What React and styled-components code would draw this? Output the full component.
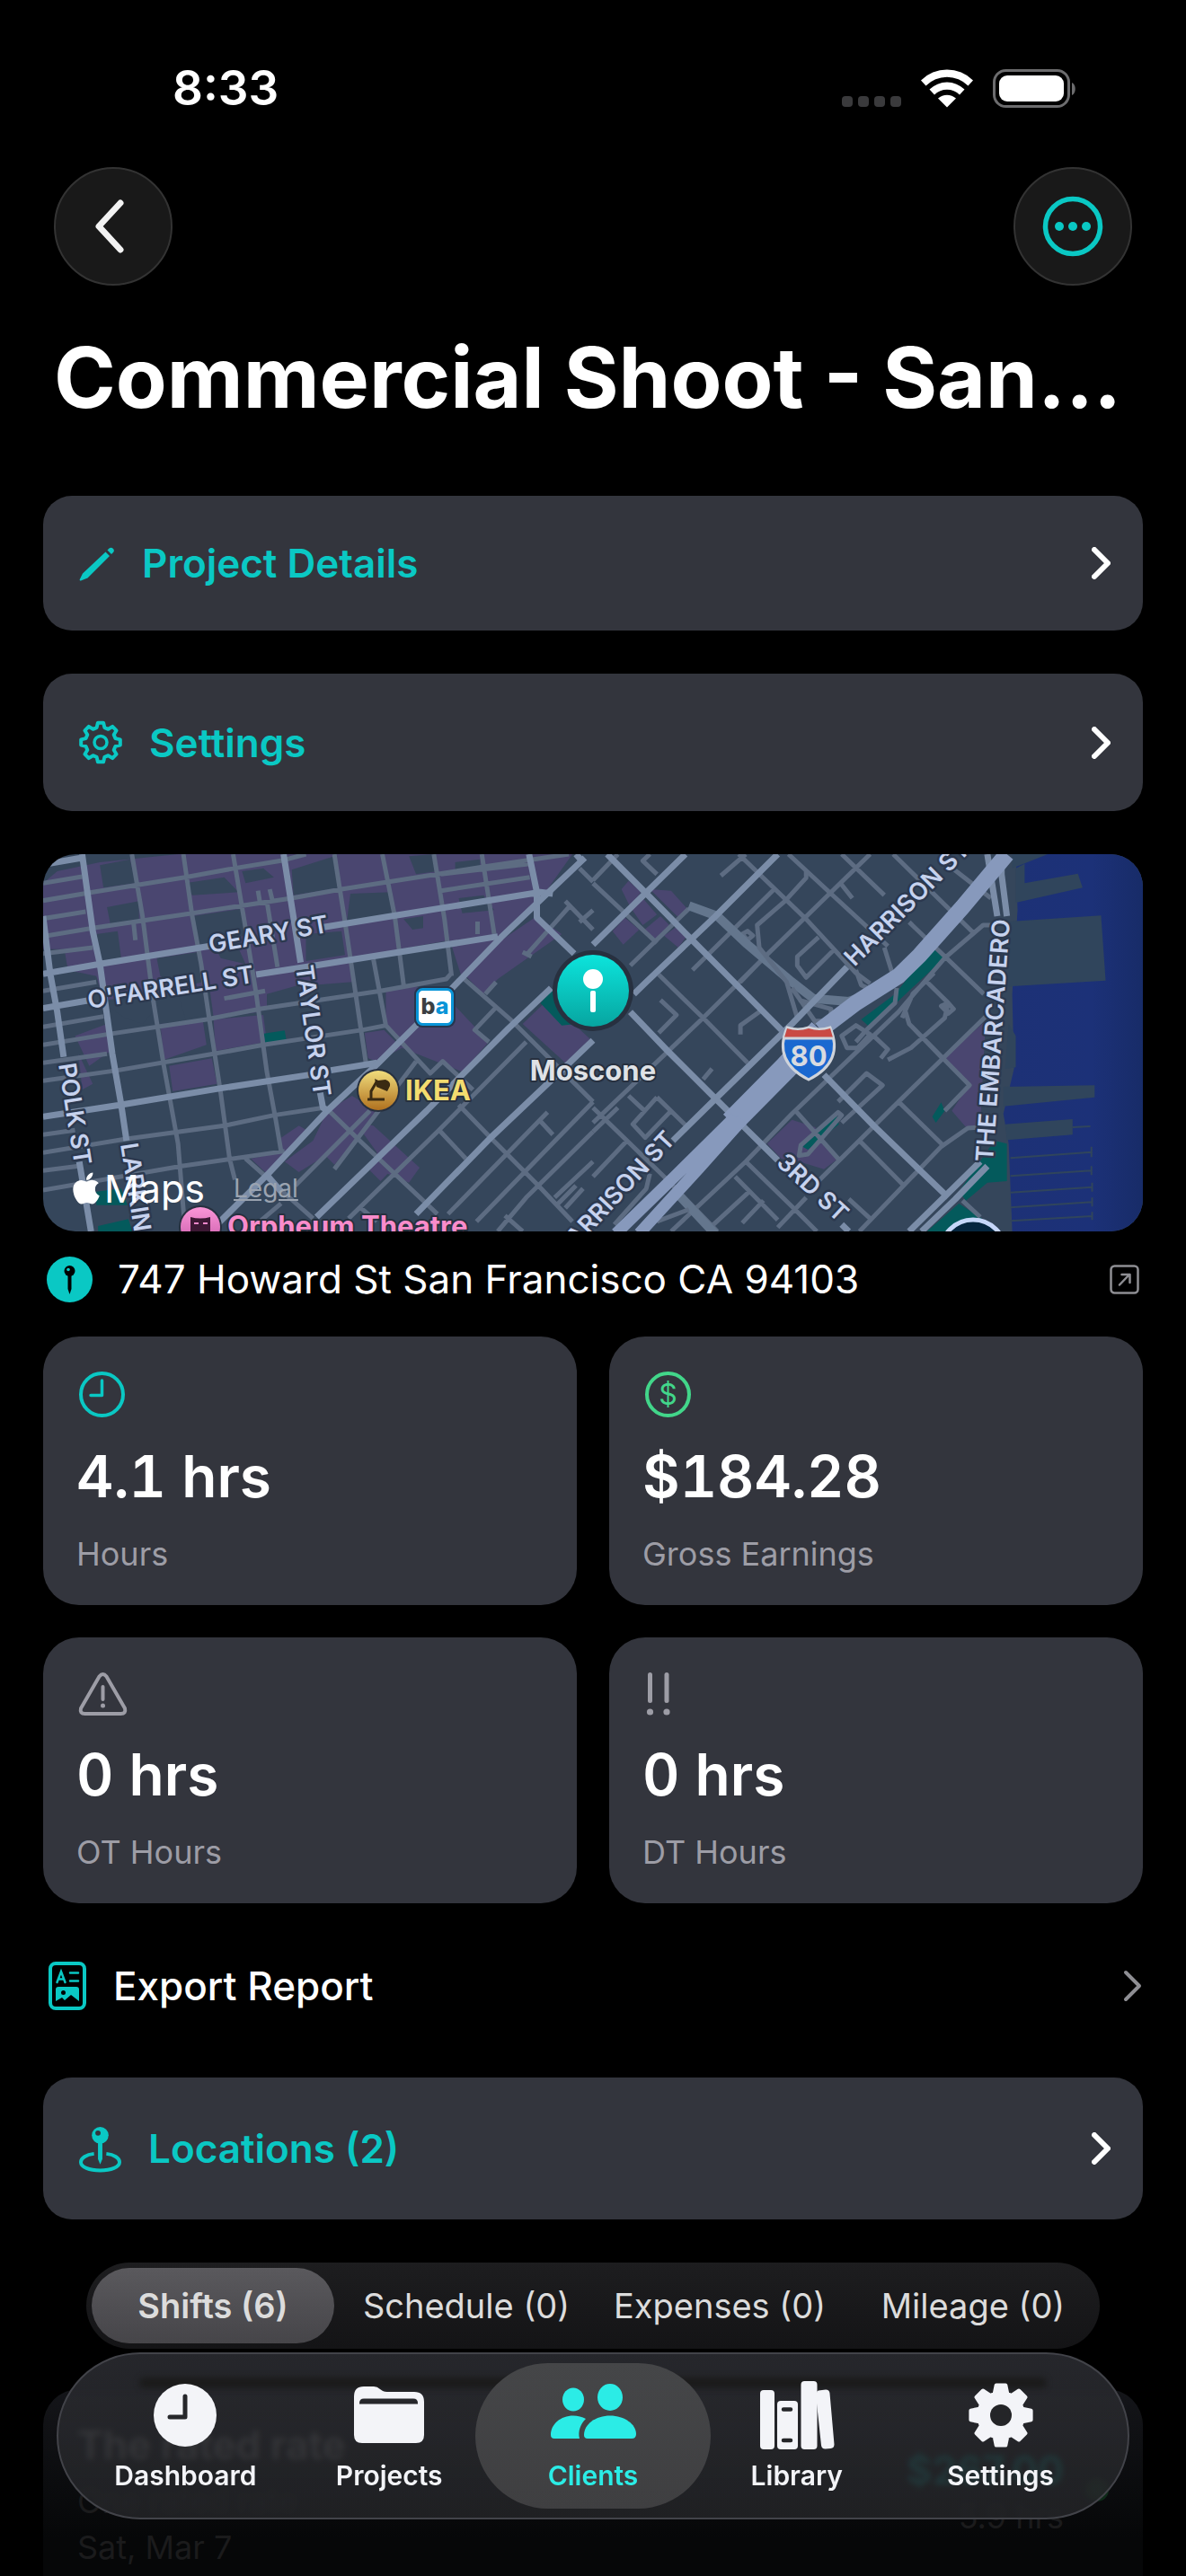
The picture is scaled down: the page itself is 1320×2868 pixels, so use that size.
import React, { useState } from "react";
import styled, { createGlobalStyle, css } from "styled-components";
import { FaApple } from "react-icons/fa";

const teal = "#0ac8c4";

const GlobalStyle = createGlobalStyle`
  * {
    box-sizing: border-box;
  }

  body {
    margin: 0;
    background: #000;
    color: #fff;
    font-family: Inter, "Liberation Sans", sans-serif;
  }

  button {
    border: 0;
    padding: 0;
    background: none;
    color: inherit;
    font: inherit;
    cursor: pointer;
  }

  svg {
    display: block;
    flex: none;
  }
`;

const Page = styled.div`
  min-height: 100vh;
  display: flex;
  flex-direction: column;
`;

const StatusBar = styled.div`
  display: flex;
  align-items: center;
  justify-content: space-between;
  padding: 68px 120px 58px 192px;
  line-height: 60px;
  font-size: 53px;
  font-weight: 600;
`;

const NavBar = styled.nav`
  display: flex;
  justify-content: space-between;
  padding: 0 60px;
`;

const RoundButton = styled.button`
  width: 132px;
  height: 132px;
  display: flex;
  align-items: center;
  justify-content: center;
  border: 2px solid #333;
  border-radius: 50%;
  background: #191919;
`;

const Title = styled.h1`
  margin: 0;
  padding: 42px 60px 72px;
  font-size: 93px;
  font-weight: 700;
  line-height: 120px;
  white-space: nowrap;
  overflow: hidden;
`;

const Content = styled.main`
  flex: 1;
  display: flex;
  flex-direction: column;
  padding: 0 48px;
`;

const Stack = styled.div`
  display: flex;
  flex-direction: column;
  gap: 48px;
`;

const RowButton = styled.button`
  display: flex;
  align-items: center;
  gap: 30px;
  width: 100%;
  text-align: left;
  font-size: 44px;
  font-weight: 500;
  line-height: 54px;

  span {
    flex: 1;
  }

  ${(props) =>
    props.$card
      ? css`
          padding: 48px 36px 48px 40px;
          border-radius: 32px;
          background: #33353d;
          color: ${teal};
          font-weight: 600;
        `
      : css`
          padding: 65px 1px 75px 6px;
        `}
`;

const MapBox = styled.div`
  position: relative;
  height: 420px;
  border-radius: 36px;
  overflow: hidden;

  > svg {
    width: 100%;
    height: 100%;
  }
`;

const MapCredit = styled.div`
  position: absolute;
  left: 28px;
  bottom: 20px;
  display: flex;
  align-items: center;
  font-size: 43px;
  line-height: 56px;

  a {
    margin-left: 32px;
    color: #9aa3b0;
    font-size: 28px;
  }
`;

const Address = styled.div`
  display: flex;
  align-items: center;
  gap: 28px;
  padding: 27px 4px 38px;
  font-size: 44px;
  line-height: 52px;

  span {
    flex: 1;
  }
`;

const Stats = styled.div`
  display: grid;
  grid-template-columns: 1fr 1fr;
  gap: 36px;
`;

const StatCard = styled.div`
  padding: 39px 37px 35px;
  border-radius: 40px;
  background: #33353d;

  .value {
    margin: 26px 0 24px;
    font-size: 64px;
    font-weight: 600;
    font-variant-numeric: tabular-nums;
    line-height: 80px;
  }

  .label {
    color: #9d9da6;
    font-size: 36px;
    line-height: 44px;
  }
`;

const Segments = styled.div`
  display: grid;
  grid-template-columns: repeat(4, 1fr);
  margin: 48px 48px 45px;
  height: 96px;
  border-radius: 48px;
  background: linear-gradient(#1d1d1f, #141416);
`;

const Segment = styled.button`
  margin: 6px;
  border-radius: 42px;
  color: #dcdcdc;
  font-size: 38px;
  white-space: nowrap;

  ${(props) =>
    props.$active &&
    css`
      background: linear-gradient(#5a595d, #464549);
      font-weight: 600;
    `}
`;

const ShiftCard = styled.article`
  flex: 1;
  display: flex;
  justify-content: space-between;
  padding: 32px 38px 0;
  border-radius: 40px 40px 0 0;
  background: linear-gradient(#141519, #060708 80%);
  color: #1b1b1c;
  font-size: 36px;
  line-height: 44px;

  .name {
    color: #757575;
    font-size: 44px;
    font-weight: 600;
    line-height: 60px;
    padding-bottom: 11px;
  }

  .date {
    padding-top: 7px;
  }
`;

const ShiftPay = styled.div`
  display: grid;
  grid-template-columns: auto 26px;
  align-items: center;
  align-content: start;
  column-gap: 24px;
  padding-top: 28px;
  text-align: right;

  .amount {
    color: #078a86;
    font-size: 44px;
    font-weight: 600;
    line-height: 60px;
  }

  .dot {
    grid-row: span 2;
    width: 26px;
    height: 26px;
    border-radius: 50%;
    background: #0e2b19;
  }
`;

const TabBar = styled.nav`
  position: fixed;
  right: 63px;
  bottom: 63px;
  left: 63px;
  display: grid;
  grid-template-columns: repeat(5, 1fr);
  height: 186px;
  padding: 10px 28px;
  border: 2px solid #424349;
  border-radius: 93px;
  background: linear-gradient(
    rgba(39, 40, 45, 0.97),
    rgba(40, 41, 45, 0.84) 50%,
    rgba(36, 37, 40, 0.84)
  );
  backdrop-filter: blur(3px);

  &:before {
    content: "";
    position: absolute;
    top: 26px;
    right: 90px;
    left: 90px;
    height: 12px;
    border-radius: 6px;
    background: #1b1b1b;
    filter: blur(3px);
  }
`;

const Tab = styled.button`
  position: relative;
  display: flex;
  flex-direction: column;
  align-items: center;
  justify-content: center;
  gap: 10px;
  margin: 0 -18px;
  border-radius: 81px;
  color: #f3f4f8;
  font-size: 30px;
  font-weight: 600;
  line-height: 36px;

  ${(props) =>
    props.$active &&
    css`
      background: linear-gradient(#454648, #3f3f41);
      color: #2bece6;
    `}
`;

// closed outline of an eight-toothed cog around (0, 0)
function gearPath(outer, inner, top, base) {
  const points = [];
  for (let i = 0; i < 8; i++) {
    const steps = [
      [inner, -base],
      [outer, -top],
      [outer, top],
      [inner, base],
    ];
    steps.forEach(([r, deg]) => {
      const a = ((i * 45 + deg - 90) * Math.PI) / 180;
      points.push(`${(r * Math.cos(a)).toFixed(1)} ${(r * Math.sin(a)).toFixed(1)}`);
    });
  }
  return `M${points.join("L")}Z`;
}

function StatusIcons() {
  return (
    <svg width="263" height="46" viewBox="0 0 263 46" fill="#fff">
      {[0, 18, 36, 54].map((x) => (
        <rect key={x} x={x} y="32" width="12" height="12" rx="4" fill="#3a3a3c" />
      ))}
      <path d="M88 14.500a41 41 0 0 1 58 0l-5.500 6a33 33 0 0 0-47 0z" />
      <path d="M97.500 24.500a28 28 0 0 1 39 0l-5.500 6a20 20 0 0 0-28 0z" />
      <path d="M107 34.500a15 15 0 0 1 20 0l-10 10z" />
      <rect x="169.500" y="3.500" width="83" height="40" rx="13" fill="none" stroke="#6c6c6e" strokeWidth="3" />
      <rect x="175" y="9" width="72" height="29" rx="9" />
      <path d="M256 17c5 2 5 12 0 14z" fill="#6c6c6e" />
    </svg>
  );
}

function Chevron({ color = "#fff", thick = 6 }) {
  return (
    <svg width="21" height="36" viewBox="0 0 21 36" fill="none">
      <path
        d="M3 3L18 18L3 33"
        stroke={color}
        strokeWidth={thick}
        strokeLinecap="round"
        strokeLinejoin="round"
      />
    </svg>
  );
}

function PencilIcon() {
  return (
    <svg width="40" height="54" viewBox="0 0 40 54" fill={teal}>
      <path d="M29.500 14.500l4.500 4.500L9.500 43.500l-7.500 3a1 1 0 0 1-1.300-1.300L4 38.500z" />
      <path d="M31.500 12.500l2-2a3.200 3.200 0 0 1 4.500 4.500l-2 2z" />
    </svg>
  );
}

function GearIcon() {
  return (
    <svg width="48" height="57" viewBox="-24 -28.500 48 57" fill="none" stroke={teal}>
      <path d={gearPath(22, 17, 8, 15)} strokeWidth="4" strokeLinejoin="round" />
      <circle r="7" strokeWidth="3.500" />
    </svg>
  );
}

function LocationIcon() {
  return (
    <svg width="47" height="62" viewBox="0 0 48 62" fill="none">
      <path
        d="M17 37C8 38 2 42 2 46.500C2 52 11.500 56 24 56S46 52 46 46.500C46 42 40 38 31 37"
        stroke={teal}
        strokeWidth="4"
      />
      <path d="M21.500 23h5v20l-2.500 6l-2.500-6z" fill={teal} />
      <circle cx="24" cy="16" r="9.500" fill={teal} />
      <circle cx="21.500" cy="13.500" r="3" fill="#33353d" />
    </svg>
  );
}

function ReportIcon() {
  return (
    <svg width="42" height="54" viewBox="0 0 42 54" fill="none" stroke={teal}>
      <rect x="2" y="2" width="38" height="50" rx="6" strokeWidth="4" />
      <path d="M9.500 23l4.500-12l4.500 12M11 19.500h6M24 12.500h9M24 21.500h9" strokeWidth="2.500" strokeLinecap="round" />
      <path d="M11 28h20q3 0 3 3v13l-9-7l-7 6l-3-3l-7 4V31q0-3 3-3z" fill={teal} stroke="none" />
      <circle cx="16.500" cy="34.500" r="2.500" fill="#000" stroke="none" />
    </svg>
  );
}

function ClockIcon() {
  return (
    <svg width="56" height="51" viewBox="-3 0 56 51" fill="none" stroke={teal} strokeLinecap="round">
      <circle cx="25.500" cy="25.500" r="23.500" strokeWidth="4" />
      <path d="M25.500 10v16.500H13" strokeWidth="3.500" strokeLinejoin="round" />
    </svg>
  );
}

const DollarText = styled.text`
  font-size: 32px;
  text-anchor: middle;
`;

function DollarIcon() {
  return (
    <svg width="56" height="51" viewBox="-3 0 56 51" fill="none">
      <circle cx="25.500" cy="25.500" r="23.500" stroke="#42d68a" strokeWidth="4" />
      <DollarText x="25.500" y="37" fill="#42d68a">
        $
      </DollarText>
    </svg>
  );
}

function WarningIcon() {
  return (
    <svg width="57" height="48" viewBox="-3 0 57 48" fill="none" stroke="#9d9da6" strokeWidth="4" strokeLinecap="round">
      <path d="M22.500 4.500q4-5 8 0L51 40q1.500 6-4.500 6H6.500Q.5 46 2 40z" strokeLinejoin="round" />
      <path d="M26.500 16v14" />
      <circle cx="26.500" cy="37" r="2.500" fill="#9d9da6" stroke="none" />
    </svg>
  );
}

function ExclaimIcon() {
  return (
    <svg width="57" height="48" viewBox="-3 0 57 48" fill="#9d9da6">
      {[3, 21.5].map((x) => (
        <g key={x}>
          <rect x={x} y="0" width="5" height="34" rx="2.500" />
          <circle cx={x + 2.5} cy="44" r="3.600" />
        </g>
      ))}
    </svg>
  );
}

function PinBadge() {
  return (
    <svg width="51" height="51" viewBox="0 0 51 51">
      <circle cx="25.500" cy="25.500" r="25.500" fill={teal} />
      <circle cx="25.500" cy="16" r="6" />
      <path d="M23.500 20h4v16l-2 6l-2-6z" />
      <circle cx="24" cy="14.500" r="1.800" fill={teal} />
    </svg>
  );
}

function OpenIcon() {
  return (
    <svg width="33" height="33" viewBox="0 0 33 33" fill="none" stroke="#8e8e93" strokeLinecap="round" strokeLinejoin="round">
      <rect x="1.500" y="1.500" width="30" height="30" rx="4" strokeWidth="2.500" />
      <path d="M11 22.500L22 11M13.500 11H22.500V20" strokeWidth="2.500" />
    </svg>
  );
}

function TabIcon({ name }) {
  return (
    <svg width="96" height="78" viewBox="-48 -39 96 78" fill="currentColor">
      {name === "Dashboard" && (
        <>
          <circle r="35" />
          <path d="M0-21V2H-17" fill="none" stroke="#26272b" strokeWidth="5" strokeLinecap="round" strokeLinejoin="round" />
        </>
      )}
      {name === "Projects" && (
        <>
          <path d="M-39-21q0-11 11-11h11q4 0 7 3l3 2q2 1 5 1H28q11 0 11 11v37q0 9-9 9H-30q-9 0-9-9z" />
          <path d="M-33-12.500v-1q0-5 5-5H27q5 0 5 5v1z" fill="#26272b" />
        </>
      )}
      {name === "Clients" && (
        <>
          <ellipse cx="-22" cy="-17.500" rx="12" ry="13" />
          <ellipse cx="19" cy="-20" rx="14" ry="15" />
          <path d="M-47 22C-47 10-36 0.500-22 0.500C-17 0.500-12 2-8 4C-14 10-17 18-15 26H-43Q-47 26-47 22z" />
          <path d="M-10 22C-10 10 3 0.500 19 0.500S48 10 48 21Q48 26 43 26H-6Q-10 26-10 22z" />
        </>
      )}
      {name === "Library" && (
        <>
          <rect x="-41" y="-28" width="16" height="66" rx="4" />
          <rect x="-22" y="-16" width="23" height="54" rx="4" />
          <rect x="4.500" y="-38" width="18" height="76" rx="4" />
          <path d="M22-25q0-2 2-2.400l8-1q4 0 4.500 4l5 57q0 4-4 4.500l-6 .5q-4 0-4.500-4l-6-56z" />
          <path d="M-15-6.500h8M-15 28h8" stroke="#242528" strokeWidth="4.500" strokeLinecap="round" />
        </>
      )}
      {name === "Settings" && (
        <>
          <path d={gearPath(34, 25, 9, 17)} stroke="currentColor" strokeWidth="4" strokeLinejoin="round" />
          <circle r="12" fill="#242528" />
        </>
      )}
    </svg>
  );
}

const StreetLabel = styled.text`
  fill: #c6d2ee;
  stroke: #2c394f;
  stroke-width: 5px;
  stroke-linejoin: round;
  paint-order: stroke;
  font-size: 27px;
  font-weight: 600;
`;

const PlaceLabel = styled.text`
  stroke: #27303f;
  stroke-width: 4px;
  stroke-linejoin: round;
  paint-order: stroke;
  font-size: 31px;
  font-weight: 700;
`;

const MapLayer = styled.g`
  fill: none;
  stroke-linejoin: round;

  path {
    vector-effect: non-scaling-stroke;
  }

  .minor {
    stroke: #5d6c82;
    stroke-width: 5px;
  }

  .major {
    stroke: #7b8da8;
    stroke-width: 7px;
  }

  .ramp {
    stroke: #64768d;
    stroke-width: 10px;
  }

  .freeway {
    stroke: #8799bc;
  }

  .shops {
    fill: #4a4670;
  }

  .land {
    fill: #35465b;
  }

  .pier {
    fill: #30455c;
  }

  .park {
    fill: #045a5c;
  }
`;

const streets = [
  { name: "GEARY ST", x: 186, y: 110, turn: -10 },
  { name: "O'FARRELL ST", x: 51, y: 172, turn: -9 },
  { name: "TAYLOR ST", x: 281, y: 125, turn: 82 },
  { name: "POLK ST", x: 17, y: 234, turn: 81 },
  { name: "LARKIN ST", x: 86, y: 323, turn: 81 },
  { name: "HARRISON ST", x: 903, y: 126, turn: -45 },
  { name: "HARRISON ST", x: 705, y: 319, turn: -47, anchor: "end" },
  { name: "3RD ST", x: 815, y: 345, turn: 43 },
  { name: "THE EMBARCADERO", x: 1057, y: 343, turn: -86 },
];

function CityMap() {
  return (
    <svg viewBox="0 0 1224 420" preserveAspectRatio="xMidYMid slice" role="img" aria-label="Map of Moscone">
      <defs>
        <linearGradient id="pinFill" x2="0" y2="1">
          <stop offset="0" stopColor="#0ce4dc" />
          <stop offset="1" stopColor="#07a5a0" />
        </linearGradient>
        <linearGradient id="goldFill" x2="0" y2="1">
          <stop offset="0" stopColor="#f0dc7c" />
          <stop offset="1" stopColor="#b0711f" />
        </linearGradient>
        <linearGradient id="pinkFill" x2="0" y2="1">
          <stop offset="0" stopColor="#fa96d8" />
          <stop offset="1" stopColor="#c95aa8" />
        </linearGradient>
        <linearGradient id="bayFill">
          <stop offset="0" stopColor="#1d3176" />
          <stop offset=".6" stopColor="#1c3178" />
          <stop offset="1" stopColor="#172b66" />
        </linearGradient>
      </defs>
      <rect width="1224" height="420" fill="#35465b" />

      {/* downtown, west of the pin */}
      <MapLayer transform="translate(-8 -11) scale(.3954 .3333)">
        <path
          className="shops"
          d="M20 130L60 90L180 60L400 33H1510L1410 200L1310 310L1200 450L1165 320L885 380L890 460L780 470L700 500L630 560L500 580L490 490L190 520L170 440L90 420L80 350L20 350ZM350 600L470 590L480 670L360 720ZM375 740L495 715L510 800L385 825ZM500 585L640 570L650 660L505 690ZM985 490L1070 475L1180 540L1275 660L1200 760L1030 680L985 600ZM925 630L980 620L1030 680L960 725L935 715ZM1310 320L1410 240L1480 300L1300 450L1260 500L1210 440ZM1370 600L1440 520L1560 650L1490 730ZM690 980L740 940L770 960L650 1100L605 1050L690 1030ZM890 840L930 870L960 900L840 1070L815 1040L740 1095L700 1060L780 990L820 890ZM900 930L950 940L1080 1080L1050 1130L990 1100L970 1125L940 1090L960 1030ZM110 640L200 600L210 690L150 740ZM120 700L160 800L130 820Z"
        />
        <path
          className="land"
          d="M180 70L265 50L280 130L190 145ZM440 240L580 215L590 300L560 320L460 340ZM720 85L840 40L855 145L725 170ZM340 380L455 360L470 460L400 480L350 440ZM885 165L1000 160L1005 230L875 260ZM200 210L290 190L290 260L210 270ZM1050 40L1120 33L1130 90L1070 100ZM420 130L530 110L570 160L440 170ZM170 300L230 290L240 380L185 390ZM760 300L860 290L870 370L760 390ZM1035 250L1090 240L1090 280L1060 285ZM400 500L480 490L485 570L420 580ZM190 530L320 510L330 560L300 600L250 580ZM650 500L740 470L760 530L650 550ZM1180 60L1250 50L1250 80L1180 90ZM580 90L640 80L670 110L590 130ZM1190 180L1260 170L1290 220L1200 230ZM500 330L560 320L590 400L520 380Z"
        />
        <path
          className="park"
          d="M642 632L700 622L705 655L645 663ZM1420 530L1455 485L1520 600L1480 605ZM170 1160L240 1150L258 1205L170 1205ZM175 1275L260 1252L272 1293H175Z"
        />
        <path
          className="minor"
          d="M20 130L130 108M20 188L160 160L420 110L560 80L690 55L760 33M20 248L140 225M20 308L160 280L440 230L720 180L860 150L1130 100L1260 75L1500 33M20 365L160 345M20 490L170 460M20 610L190 575M20 670L200 635L480 585L630 550L970 490L1155 450L1170 430M20 730L200 700M20 790L230 755L500 700L640 670L920 620L985 605L1110 765L1145 725L1230 820M20 970L110 955M20 1030L250 985L530 940L670 905L810 880M20 1090L120 1075M20 1155L410 1075L700 1025M270 33L300 240L330 520L360 740L400 1000L420 1293M415 33L440 240L465 400L490 600L520 830L545 1050L560 1120M555 33L590 280L620 500L650 760L675 920L690 1025M840 33L870 260L895 460L930 740M975 33L1010 240L1035 470M1120 33L1150 250L1170 440M1255 33L1290 300M650 190L680 410M950 385L985 605M1140 155L1390 110M1140 100L1390 65M625 155L630 190M658 150L665 185M275 265L280 320M530 515L645 490M1243 258V300M1205 450L1340 590L1568 860M825 890L920 1000L1130 1235M590 1050L780 1250M1190 870L1280 980L1410 1135L1510 1260M1135 955L1210 1050M1500 210L1380 370M1370 360L1395 375M1490 190L1568 285M1568 220L1530 260M1295 460L1265 500M1295 545L1235 620L1275 660M1380 660L1130 960L880 1250M1070 725L840 1085M940 890L730 1140M1440 895L1160 1235M1420 925L1455 970M1568 860L1240 1260M1568 960L1380 1180L1300 1293M1568 1060L1460 1180M1540 1150L1490 1215M1520 1140L1470 1200M1320 1240L1370 1293M910 1210L960 1260M1530 80L1568 125M690 1200L620 1270"
        />
        <path
          className="major"
          d="M20 68L130 45M130 33L160 290L180 400L215 700L240 870L255 990M20 240L40 430L60 560L78 710M122 1060L155 1293M20 433L180 400L490 340M810 277L1000 240L1420 160L1455 165M20 548L145 522M620 435L785 405L1300 308M697 33L745 395M800 830L808 880L825 890M20 910L240 870L520 815L770 770M830 755L960 730M1388 33L1410 160L1410 245L1515 365M1450 480L1330 615L1200 770L1100 890L960 1050L790 1245M1568 655L1440 800L1280 980L1070 1235M1520 33L1540 60M650 1105L690 1160"
        />
        <path className="major" strokeWidth="9" d="M1545 45L1310 310L1180 470L1070 605L960 735L820 890L650 1105L510 1270" />
      </MapLayer>

      {/* south of market and the waterfront */}
      <MapLayer transform="translate(612 -11) scale(.3954 .3333)">
        <path
          d="M1190 33H1568V1293H1180L1170 1000L1155 900L1185 750L1180 500L1195 220Z"
          fill="url(#bayFill)"
        />
        <path
          className="pier"
          d="M1180 80L1280 33H1180ZM1215 130L1365 98L1378 145L1190 195V80L1215 65ZM1170 258L1430 238L1443 455L1170 475ZM1155 810L1412 805V845L1155 875ZM1160 935L1350 918V970L1165 988ZM1170 600L1190 640V745L1160 750Z"
        />
        <path
          stroke="#30455c"
          strokeWidth="2"
          d="M1350 945L1400 942M1175 1048L1403 1028M1175 1108L1403 1090M1175 1163L1405 1145M1175 1213L1405 1195M1175 1258L1405 1242M1403 1010V1045M1403 1075V1105M1405 1130V1160M1405 1180V1210M1405 1228V1255"
        />
        <path
          className="shops"
          d="M80 150L100 122L135 160L105 210ZM160 150L220 155L265 215L245 250ZM105 210L140 180L180 235L140 270ZM90 245L130 285L85 335L55 290ZM145 285L190 240L215 270L175 320ZM200 305L235 275L262 310L240 345ZM1105 590L990 710L1060 800L1010 890L1050 945L1090 940ZM490 1000L560 920L625 945L690 1050L650 1085L580 1060L530 1050Z"
        />
        <path
          className="park"
          d="M955 345L988 380L780 612L755 585L850 500ZM590 1010L685 905L692 935L605 1020ZM1130 990L1165 1000V1125L1110 1130L1050 1190L1030 1160ZM1030 1200L1095 1250L1050 1293H940ZM955 910L980 862L990 890L965 930Z"
        />
        <path
          className="minor"
          d="M410 33L600 250L740 430L780 465M550 33L670 165L830 340M700 33L820 170M700 135L730 180M845 33L1070 295M990 60L1120 180M890 260L1100 500M780 33L480 380L415 460M430 33L360 105M510 150L280 420M0 130L180 330M185 435L310 580L435 730M105 405L270 215M70 33L0 120M190 520L235 570L185 630M480 550L415 605V635M480 380L310 580L0 930M0 880L200 1110L350 1293M100 840L145 890M180 845L262 940M180 845L112 935L147 980L220 890M335 750L310 785M160 33L140 55L180 100M635 310L575 375V405L600 445L680 350M1120 270H1098L990 380L860 560L560 900L430 1060L220 1293M1110 570L860 860L630 1130M1090 945L1055 948L980 1010L750 1293M690 860L770 765L815 805L700 930M690 895L585 1005L580 1040L605 1035L700 905ZM860 860L985 1005M750 990L875 1140M790 640L830 685L810 715M890 600L1060 805L990 890M940 460L1000 530L990 580L895 680L830 720M880 560L890 600L980 710M870 580L900 500L960 430M430 1060L560 1210L630 1293M570 890L690 1050M400 1110L520 1255M480 1190L420 1265M440 1160L330 1280M600 1180L520 1280M720 1185L780 1250M1040 1190L1090 1245M100 985L0 1110M0 960L70 880M700 640L740 605L780 635L745 680H715ZM980 540L1000 530L1015 550L1000 565ZM420 300L435 290L450 305L435 320Z"
        />
        <path
          className="ramp"
          d="M270 205L350 240L430 330L560 460L620 515L720 525L800 490M240 1170L350 1310"
        />
        <path
          className="minor"
          d="M600 90V112L540 190L462 270L468 345L545 460L575 580M820 345L845 440M740 420L755 470L790 490M560 480L630 600M855 480L850 530L770 620L740 660M580 520L670 550V590H620M160 1100L150 1150L60 1270M270 1220L180 1260"
        />
        <path
          className="major"
          d="M1110 33L1138 240M1150 33V100L1165 240M1090 1060L1000 1165L890 1293M1110 1075L1020 1185L925 1293M40 33L145 158L275 315L530 620M650 770L790 940L1000 1180M520 33L345 240L150 460L115 500M260 33L0 335M105 560L210 690L345 850L430 950L520 1055M700 1270L720 1293M715 410L560 600L345 850L225 990"
        />
        <path className="freeway" strokeWidth="18" d="M1165 33L1040 210L920 370L860 440L740 530L640 620" />
        <path className="freeway" strokeWidth="26" d="M640 620L540 750L390 930" />
        <path className="freeway" strokeWidth="13" d="M400 910L230 1110L65 1300M420 920L300 1080L130 1300" />
      </MapLayer>

      {streets.map((street, i) => (
        <StreetLabel
          key={i}
          textAnchor={street.anchor}
          transform={`translate(${street.x} ${street.y}) rotate(${street.turn})`}
        >
          {street.name}
        </StreetLabel>
      ))}

      <g transform="translate(415 149)">
        <rect x="-2" y="-2" width="46" height="46" rx="9" fill="#27364d" />
        <rect x="1.500" y="1.500" width="39" height="39" rx="6" fill="#fff" stroke="#0a95d8" strokeWidth="3" />
        <text x="21" y="29" fontSize="25" fontWeight="800" textAnchor="middle" fill="#3b3f42">
          b<tspan fill="#0a95d8">a</tspan>
        </text>
      </g>

      <circle cx="373" cy="263" r="24" fill="#27303f" />
      <circle cx="373" cy="263" r="22" fill="url(#goldFill)" />
      <path d="M361 273h19M365 272v-8l7-12" fill="none" stroke="#3a2a12" strokeWidth="3" />
      <path d="M369 250l4 2 8-1q6 2 5 7l-3 6-12-5z" fill="#3a2a12" />
      <PlaceLabel x="403" y="274" fill="#f3dc6f">
        IKEA
      </PlaceLabel>

      <circle cx="175" cy="415" r="24" fill="#27303f" />
      <circle cx="175" cy="415" r="22" fill="url(#pinkFill)" />
      <path d="M164 404q11 3 22 0v18h-22z" fill="#3c1834" />
      <path d="M168 411h5M178 411h5" stroke="#ef88cb" strokeWidth="2" />
      <PlaceLabel x="205" y="425" fill="#f98ccb">
        Orpheum Theatre
      </PlaceLabel>

      <circle cx="612" cy="152" r="45" fill="#27303f" />
      <circle cx="612" cy="152" r="40" fill="url(#pinFill)" />
      <circle cx="612" cy="139" r="11" fill="#fff" />
      <rect x="609" y="152" width="6" height="24" rx="2" fill="#fff" />
      <PlaceLabel x="612" y="252" textAnchor="middle" fill="#dfe2e6">
        Moscone
      </PlaceLabel>

      <path
        d="M828 193q12 4 24 0q12 4 24 0q16 38-24 58q-40-20-24-58z"
        fill="#1a68d0"
        stroke="#cfd3da"
        strokeWidth="3"
      />
      <path d="M828 194q12 4 24 0q12 4 24 0l3 10h-54z" fill="#c94a44" />
      <path d="M825 205h54" stroke="#cfd3da" strokeWidth="3" />
      <text x="852" y="236" fontSize="31" fontWeight="700" textAnchor="middle" fill="#d8dbe0">
        80
      </text>
      <circle cx="1035" cy="443" r="36" fill="#06263f" stroke="#c6d6f8" strokeWidth="5" />
    </svg>
  );
}

const stats = [
  { value: "4.1 hrs", label: "Hours", icon: <ClockIcon /> },
  { value: "$184.28", label: "Gross Earnings", icon: <DollarIcon /> },
  { value: "0 hrs", label: "OT Hours", icon: <WarningIcon /> },
  { value: "0 hrs", label: "DT Hours", icon: <ExclaimIcon /> },
];

const segments = ["Shifts (6)", "Schedule (0)", "Expenses (0)", "Mileage (0)"];
const tabs = ["Dashboard", "Projects", "Clients", "Library", "Settings"];

function App() {
  const [segment, setSegment] = useState(segments[0]);
  const [tab, setTab] = useState("Clients");

  return (
    <Page>
      <GlobalStyle />
      <StatusBar>
        8:33
        <StatusIcons />
      </StatusBar>
      <NavBar>
        <RoundButton aria-label="Back">
          <svg width="40" height="60" viewBox="0 0 40 60" fill="none">
            <path d="M28 4L4 30L28 56" stroke="#f2f2f2" strokeWidth="7" strokeLinecap="round" strokeLinejoin="round" />
          </svg>
        </RoundButton>
        <RoundButton aria-label="More">
          <svg width="68" height="68" viewBox="0 0 68 68" fill={teal}>
            <circle cx="34" cy="34" r="30.500" fill="none" stroke={teal} strokeWidth="5.500" />
            <circle cx="19" cy="34" r="5" />
            <circle cx="34" cy="34" r="5" />
            <circle cx="49" cy="34" r="5" />
          </svg>
        </RoundButton>
      </NavBar>
      <Title>Commercial Shoot - San…</Title>

      <Content>
        <Stack>
          <RowButton $card>
            <PencilIcon />
            <span>Project Details</span>
            <Chevron />
          </RowButton>
          <RowButton $card>
            <GearIcon />
            <span>Settings</span>
            <Chevron />
          </RowButton>
          <MapBox>
            <CityMap />
            <MapCredit>
              <FaApple size={40} />
              Maps
              <a href="#legal">Legal</a>
            </MapCredit>
          </MapBox>
        </Stack>

        <Address>
          <PinBadge />
          <span>747 Howard St San Francisco CA 94103</span>
          <OpenIcon />
        </Address>

        <Stats>
          {stats.map((stat) => (
            <StatCard key={stat.label}>
              {stat.icon}
              <div className="value">{stat.value}</div>
              <div className="label">{stat.label}</div>
            </StatCard>
          ))}
        </Stats>

        <RowButton>
          <ReportIcon />
          <span>Export Report</span>
          <Chevron color="#8e8e93" thick={4} />
        </RowButton>
        <RowButton $card>
          <LocationIcon />
          <span>Locations (2)</span>
          <Chevron />
        </RowButton>

        <Segments>
          {segments.map((name) => (
            <Segment key={name} $active={name === segment} onClick={() => setSegment(name)}>
              {name}
            </Segment>
          ))}
        </Segments>

        <ShiftCard>
          <div>
            <div className="name">The rated rate</div>
            <div>One rated rate</div>
            <div className="date">Sat, Mar 7</div>
          </div>
          <ShiftPay>
            <div className="amount">$267.00</div>
            <div className="dot" />
            <div>5.9 hrs</div>
          </ShiftPay>
        </ShiftCard>
      </Content>

      <TabBar>
        {tabs.map((name) => (
          <Tab key={name} $active={name === tab} onClick={() => setTab(name)}>
            <TabIcon name={name} />
            {name}
          </Tab>
        ))}
      </TabBar>
    </Page>
  );
}

export default App;
